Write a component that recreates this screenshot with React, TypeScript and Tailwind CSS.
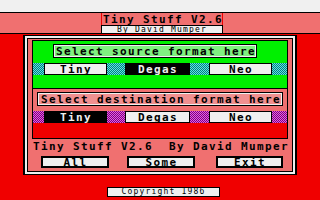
import React from "react";

const CYAN =
  "bg-[image:repeating-conic-gradient(#008080_0%_25%,#60e0e0_0%_50%)] bg-[length:2px_2px]";
const MAG =
  "bg-[image:repeating-conic-gradient(#800080_0%_25%,#e060e0_0%_50%)] bg-[length:2px_2px]";

const BIG = "font-bold text-[11px] tracking-[1.38px] leading-none whitespace-nowrap";
const SMALL = "text-[8px] tracking-[1.2px] leading-none whitespace-nowrap";

function Opt({ label, sel, w }: { label: string; sel?: boolean; w: string }) {
  return (
    <div
      className={`${w} h-full flex items-center justify-center border border-black ${
        sel ? "bg-black text-[#f0f0f0]" : "bg-[#f0f0f0] text-black"
      } ${BIG}`}
    >
      <span className="pl-[1px]">{label}</span>
    </div>
  );
}

function Row({ chk, sel }: { chk: string; sel: number }) {
  return (
    <div className="h-[12px] w-full flex">
      <div className={`w-[11px] h-full ${chk}`} />
      <Opt label="Tiny" sel={sel === 0} w="w-[63px]" />
      <div className={`w-[18px] h-full ${chk}`} />
      <Opt label="Degas" sel={sel === 1} w="w-[65px]" />
      <div className={`w-[19px] h-full ${chk}`} />
      <Opt label="Neo" sel={sel === 2} w="w-[63px]" />
      <div className={`w-[15px] h-full ${chk}`} />
    </div>
  );
}

function Btn({ label, w }: { label: string; w: string }) {
  return (
    <div
      className={`${w} h-[12px] border-2 border-black bg-[#f0f0f0] flex items-center justify-center text-black ${BIG}`}
    >
      <span className="pl-[1px]">{label}</span>
    </div>
  );
}

export default function App() {
  return (
    <div className="w-[320px] h-[200px] bg-[#f00000] flex flex-col overflow-hidden font-['DejaVu_Sans_Mono',monospace]">
      <div className="h-[12px] bg-[#f0f0f0]" />
      {/* header band */}
      <div className="h-[22px] bg-[#f07070] border-y border-black flex">
        <div className="ml-[101px] w-[122px] flex flex-col">
          <div className={`h-[12px] border-x border-[#f00000] flex items-center pl-[1px] text-black ${BIG}`}>
            Tiny Stuff V2.6
          </div>
          <div className={`h-[8px] border-t border-x border-black bg-[#f0f0f0] flex items-center justify-center text-black ${SMALL}`}>
            By David Mumper
          </div>
        </div>
      </div>
      <div className="h-[1px]" />
      {/* main framed panel */}
      <div className="ml-[23px] w-[274px] bg-black px-[2px] py-[1px]">
        <div className="bg-[#f0f0f0] p-[2px]">
          <div className="bg-black p-[1px]">
            <div className="bg-[#f07070] px-[4px] pt-[1px] flex flex-col">
              {/* source box */}
              <div className="h-[49px] border border-black bg-[#00f000] flex flex-col">
                <div className="mt-[3px] ml-[20px] w-[204px] h-[14px] border border-black">
                  <div className={`h-full border border-[#f0f0f0] bg-[#80f080] flex items-center pl-[1px] text-black ${BIG}`}>
                    Select source format here
                  </div>
                </div>
                <div className="mt-[5px]">
                  <Row chk={CYAN} sel={1} />
                </div>
              </div>
              {/* destination box */}
              <div className="h-[50px] border-x border-b border-black bg-[#f07070] flex flex-col">
                <div className="mt-[3px] ml-[4px] w-[246px] h-[14px] border border-black">
                  <div className={`h-full border border-[#f0f0f0] bg-[#f09090] flex items-center pl-[2px] text-black ${BIG}`}>
                    Select destination format here
                  </div>
                </div>
                <div className="mt-[5px]">
                  <Row chk={MAG} sel={0} />
                </div>
                <div className="flex-1 bg-[#f00000]" />
              </div>
              <div className={`mt-[3px] h-[8px] flex items-center pl-[1px] text-black ${BIG}`}>
                Tiny Stuff V2.6&nbsp;&nbsp;By David Mumper
              </div>
              <div className="mt-[6px] flex">
                <div className="ml-[9px]">
                  <Btn label="All" w="w-[68px]" />
                </div>
                <div className="ml-[18px]">
                  <Btn label="Some" w="w-[68px]" />
                </div>
                <div className="ml-[21px]">
                  <Btn label="Exit" w="w-[67px]" />
                </div>
              </div>
              <div className="h-[3px]" />
            </div>
          </div>
        </div>
      </div>
      <div className="h-[12px]" />
      <div className={`ml-[107px] w-[113px] h-[10px] border border-black bg-[#f0f0f0] flex items-center justify-center text-black ${SMALL}`}>
        Copyright 1986
      </div>
    </div>
  );
}
